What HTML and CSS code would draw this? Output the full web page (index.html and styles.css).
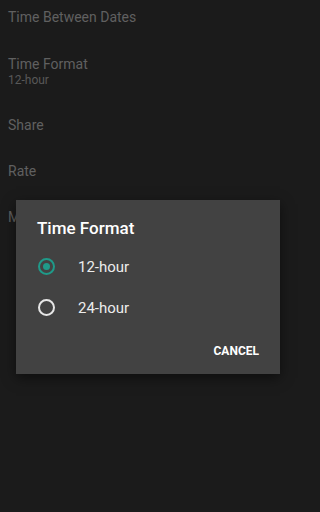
FILE: index.html
```html
<!DOCTYPE html>
<html>
<head>
<meta charset="utf-8">
<link rel="stylesheet" href="styles.css">
</head>
<body>
<div class="list">
  <div class="row"><div class="row-title">Time Between Dates</div></div>
  <div class="row two"><div class="row-title">Time Format</div><div class="row-sub">12-hour</div></div>
  <div class="row"><div class="row-title">Share</div></div>
  <div class="row"><div class="row-title">Rate</div></div>
  <div class="row"><div class="row-title">More</div></div>
</div>
<div class="dialog">
  <div class="dialog-title">Time Format</div>
  <div class="options">
    <div class="option"><span class="radio checked"></span><span class="label">12-hour</span></div>
    <div class="option"><span class="radio"></span><span class="label">24-hour</span></div>
  </div>
  <div class="actions"><span class="btn">CANCEL</span></div>
</div>
</body>
</html>
```
FILE: styles.css
```css
html, body {
  margin: 0;
  padding: 0;
  background: #1b1b1b;
  height: 512px;
  overflow: hidden;
  font-family: Roboto, "Noto Sans", sans-serif;
}
.list {
  margin-top: -6px;
}
.row {
  height: 46px;
  padding-left: 8px;
  display: flex;
  flex-direction: column;
  justify-content: center;
}
.row.two {
  height: 62px;
}
.row-title {
  font-size: 14px;
  line-height: 18px;
  color: #606060;
}
.row-sub {
  font-size: 12px;
  line-height: 15px;
  color: #585858;
}
.dialog {
  position: absolute;
  left: 16px;
  top: 200px;
  width: 264px;
  height: 174px;
  background: #424242;
  box-shadow: 0 4px 12px rgba(0,0,0,0.5);
  display: flex;
  flex-direction: column;
}
.dialog-title {
  padding: 18px 0 0 21px;
  font-size: 17px;
  line-height: 20px;
  font-weight: 500;
  color: #ffffff;
}
.options {
  margin-top: 8px;
}
.option {
  height: 41px;
  display: flex;
  align-items: center;
  padding-left: 22px;
}
.radio {
  width: 13px;
  height: 13px;
  border: 2px solid #e6e6e6;
  border-radius: 50%;
  display: flex;
  align-items: center;
  justify-content: center;
}
.radio.checked {
  border-color: #1f9a89;
}
.radio.checked::after {
  content: "";
  width: 7px;
  height: 7px;
  border-radius: 50%;
  background: #1f9a89;
}
.label {
  margin-left: 23px;
  font-size: 15px;
  color: #ececec;
}
.actions {
  margin-top: auto;
  height: 46px;
  display: flex;
  justify-content: flex-end;
  align-items: center;
  padding-right: 21px;
}
.btn {
  font-size: 12px;
  font-weight: 700;
  letter-spacing: 0;
  color: #ffffff;
}
```
